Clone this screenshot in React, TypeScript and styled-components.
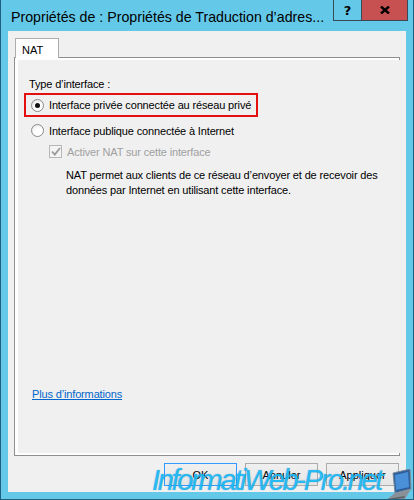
import React from "react";
import styled, { createGlobalStyle } from "styled-components";

const Global = createGlobalStyle`
  html, body { margin: 0; padding: 0; background: #ffffff; }
  body { width: 414px; height: 500px; overflow: hidden; }
  * { box-sizing: border-box; }
`;

const FONT = `"Liberation Sans", Arial, sans-serif`;

const Window = styled.div`
  position: relative;
  width: 414px;
  height: 500px;
  background: #64c9e9;
  border-left: 1px solid #1f5f80;
  border-right: 1px solid #1f5f80;
  border-bottom: 1px solid #1f5f80;
  padding: 0 7px 7px 7px;
  display: flex;
  flex-direction: column;
  font-family: ${FONT};
  overflow: hidden;
`;

const TitleBar = styled.div`
  height: 31px;
  margin: 0 -7px;
  display: flex;
  align-items: flex-start;
  padding-left: 10px;
  flex-shrink: 0;
`;

const Title = styled.div`
  flex: 1;
  font-size: 14.2px;
  line-height: 18px;
  padding-top: 8px;
  color: #000;
  white-space: nowrap;
  overflow: hidden;
`;

const Captions = styled.div`
  display: flex;
  margin-right: 5px;
`;

const CaptionButton = styled.div<{ $close?: boolean }>`
  width: ${(p) => (p.$close ? 46 : 29)}px;
  height: 21px;
  display: flex;
  align-items: center;
  justify-content: center;
  background: ${(p) => (p.$close ? "#c75050" : "#64c9e9")};
  border: 1px solid #3a4a55;
  border-left: ${(p) => (p.$close ? "none" : "1px solid #3a4a55")};
  border-top: none;
  font-family: "DejaVu Sans", sans-serif;
  font-weight: bold;
  font-size: 13px;
  color: #000;
`;

const Client = styled.div`
  flex: 1;
  background: #f0f0f0;
  display: flex;
  flex-direction: column;
  padding: 7px 6px 6px 6px;
`;

const TabStrip = styled.div`
  display: flex;
  padding-left: 1px;
  position: relative;
  z-index: 1;
  margin-bottom: -1px;
`;

const Tab = styled.div`
  width: 44px;
  height: 20px;
  background: #ffffff;
  border: 1px solid #adadad;
  border-bottom: none;
  font-size: 11px;
  line-height: 14px;
  padding: 4px 0 0 6px;
  color: #000;
`;

const Panel = styled.div`
  height: 399px;
  border: 1px solid #8e8f8f;
  background: #ffffff;
  padding: 2px 2px 2px 3px;
  display: flex;
`;

const Page = styled.div`
  flex: 1;
  background: #f0f0f0;
  display: flex;
  flex-direction: column;
  padding: 17px 0 0 6px;
  font-size: 11px;
  letter-spacing: -0.15px;
  color: #000;
`;

const Label = styled.div`
  font-size: 11px;
  line-height: 14px;
  padding-left: 5px;
  margin-bottom: 2px;
`;

const Highlight = styled.div`
  width: 234px;
  height: 24px;
  border: 2px solid #e41010;
  display: flex;
  align-items: center;
  padding-left: 5px;
`;

const OptionRow = styled.div<{ $indent?: number; $disabled?: boolean }>`
  display: flex;
  align-items: center;
  gap: 5px;
  height: 15px;
  padding-left: ${(p) => p.$indent ?? 0}px;
  color: ${(p) => (p.$disabled ? "#a0a0a0" : "#000")};
  font-size: 11px;
  white-space: nowrap;
`;

const Radio = styled.span<{ $checked?: boolean }>`
  position: relative;
  width: 13px;
  height: 13px;
  border-radius: 50%;
  border: 1px solid #8a8a8a;
  background: radial-gradient(circle at 60% 65%, #ffffff 40%, #dcdcdc 100%);
  flex-shrink: 0;
  display: flex;
  align-items: center;
  justify-content: center;
  &::after {
    content: "";
    width: 5px;
    height: 5px;
    border-radius: 50%;
    background: ${(p) => (p.$checked ? "#111" : "transparent")};
  }
`;

const Check = styled.span`
  width: 13px;
  height: 13px;
  border: 1px solid #b6b6b6;
  background: #f4f4f4;
  flex-shrink: 0;
  display: flex;
  align-items: center;
  justify-content: center;
`;

const Description = styled.div`
  padding-left: 42px;
  font-size: 11px;
  line-height: 15px;
  width: 380px;
  margin-top: 9px;
`;

const Link = styled.a`
  margin-top: auto;
  margin-bottom: 52px;
  padding-left: 8px;
  color: #0066cc;
  text-decoration: underline;
  font-size: 11px;
  line-height: 14px;
  cursor: pointer;
`;

const ButtonRow = styled.div`
  display: flex;
  justify-content: flex-end;
  gap: 8px;
  margin-top: 7px;
  padding-right: 1px;
`;

const Button = styled.div<{ $default?: boolean }>`
  width: 73px;
  height: 23px;
  border: 1px solid ${(p) => (p.$default ? "#3399ff" : "#acacac")};
  background: linear-gradient(#f0f0f0, #e5e5e5);
  display: flex;
  align-items: center;
  justify-content: center;
  font-size: 11px;
  color: #000;
`;

const Watermark = styled.div`
  position: absolute;
  left: 151px;
  bottom: 2px;
  display: flex;
  align-items: flex-end;
  white-space: nowrap;
  pointer-events: none;
`;

const WatermarkText = styled.span`
  font-family: "Liberation Sans", Arial, sans-serif;
  font-style: italic;
  font-size: 29px;
  letter-spacing: -2.3px;
  line-height: 34px;
  white-space: nowrap;
  color: rgba(30, 190, 250, 0.88);
  text-shadow: 0 0 1px rgba(0, 90, 160, 0.6);
`;

const Laptop = () => (
  <svg width="30" height="32" viewBox="0 0 30 32" style={{ marginLeft: 2, marginBottom: -4, flexShrink: 0 }}>
    <polygon points="10,4 27,0 28,20 12,24" fill="#2f5f9a" stroke="#7a8a9a" strokeWidth="1" />
    <polygon points="12,6 25,3 26,18 13,21" fill="#4a90d8" />
    <polygon points="12,24 28,20 22,30 2,32" fill="#8a9098" />
    <polygon points="4,30 22,27 21,29 4,31" fill="#5a6068" />
  </svg>
);

export default function App() {
  return (
    <>
      <Global />
      <Window>
        <TitleBar>
          <Title>Propriétés de : Propriétés de Traduction d’adres...</Title>
          <Captions>
            <CaptionButton>?</CaptionButton>
            <CaptionButton $close>
              <svg width="10" height="8" viewBox="0 0 10 8">
                <path d="M1 0.5 L9 7.5 M9 0.5 L1 7.5" stroke="#000" strokeWidth="2.4" />
              </svg>
            </CaptionButton>
          </Captions>
        </TitleBar>
        <Client>
          <TabStrip>
            <Tab>NAT</Tab>
          </TabStrip>
          <Panel>
            <Page>
              <Label>Type d’interface :</Label>
              <Highlight>
                <OptionRow>
                  <Radio $checked />
                  <span>Interface privée connectée au réseau privé</span>
                </OptionRow>
              </Highlight>
              <OptionRow $indent={7} style={{ marginTop: 6 }}>
                <Radio />
                <span>Interface publique connectée à Internet</span>
              </OptionRow>
              <OptionRow $indent={25} $disabled style={{ marginTop: 6 }}>
                <Check>
                  <svg width="10" height="9" viewBox="0 0 10 9">
                    <path d="M1 4.5 L3.8 7.5 L9 1" stroke="#9a9a9a" strokeWidth="1.8" fill="none" />
                  </svg>
                </Check>
                <span>Activer NAT sur cette interface</span>
              </OptionRow>
              <Description>
                NAT permet aux clients de ce réseau d’envoyer et de recevoir des données par Internet en utilisant cette interface.
              </Description>
              <Link>Plus d’informations</Link>
            </Page>
          </Panel>
          <ButtonRow>
            <Button $default>OK</Button>
            <Button>Annuler</Button>
            <Button>Appliquer</Button>
          </ButtonRow>
        </Client>
        <Watermark>
          <WatermarkText>InformatiWeb-Pro.net</WatermarkText>
          <Laptop />
        </Watermark>
      </Window>
    </>
  );
}
